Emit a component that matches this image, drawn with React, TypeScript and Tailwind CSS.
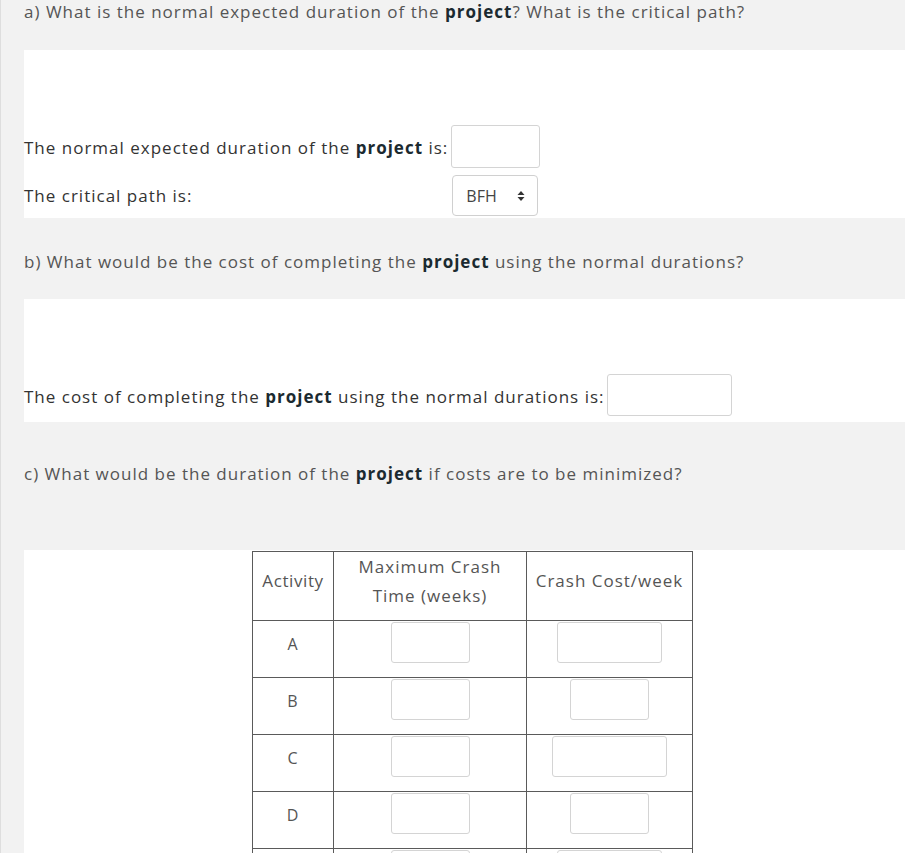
import React from 'react';

const font = { fontFamily: '"Open Sans", "Liberation Sans", sans-serif' };

function Bold({ children }: { children: React.ReactNode }) {
  return <strong className="font-bold text-[#1b2a30]">{children}</strong>;
}

function TextBox({ w }: { w: string }) {
  return <div className={`${w} rounded-[3px] border border-[#d4d4d4] bg-white`} />;
}

function SelectBox() {
  return (
    <div className="flex h-[41px] w-[86px] items-center justify-between rounded-[4px] border border-[#d0d0d0] bg-white pl-[13px] pr-[12px] text-[16px] tracking-normal text-[#444]">
      <span>BFH</span>
      <svg width="8" height="12" viewBox="0 0 8 12">
        <path d="M4 1 L7.5 5 H0.5 Z" fill="#333" />
        <path d="M4 11 L7.5 7 H0.5 Z" fill="#333" />
      </svg>
    </div>
  );
}

const rows = [
  { id: 'A', cost: 'w-[105px]' },
  { id: 'B', cost: 'w-[79px]' },
  { id: 'C', cost: 'w-[115px]' },
  { id: 'D', cost: 'w-[79px]' },
  { id: 'E', cost: 'w-[105px]' },
];

export default function App() {
  return (
    <div className="h-[853px] overflow-hidden bg-[#f2f2f2] text-[17px] tracking-[1px]" style={font}>
      <div className="border-l border-[#dedede]">
        {/* a) */}
        <div className="h-[50px] pl-[23px] leading-[24px] text-[#555]">
          a) What is the normal expected duration of the <Bold>project</Bold>? What is the critical path?
        </div>
        <div className="ml-[23px] h-[168px] bg-white pt-[75px] text-[#333]">
          <div className="grid w-fit grid-cols-[auto_auto] items-center gap-y-[7px]">
            <div className="pr-[3px] pt-[2px]">
              The normal expected duration of the <Bold>project</Bold> is:
            </div>
            <TextBox w="w-[89px] h-[43px]" />
            <div>The critical path is:</div>
            <div className="pl-[1px]">
              <SelectBox />
            </div>
          </div>
        </div>

        {/* b) */}
        <div className="h-[81px] pl-[23px] pt-[32px] leading-[24px] text-[#555]">
          b) What would be the cost of completing the <Bold>project</Bold> using the normal durations?
        </div>
        <div className="ml-[23px] h-[123px] bg-white pt-[75px] text-[#333]">
          <div className="flex items-center gap-[2px]">
            <span className="pt-[3px]">
              The cost of completing the <Bold>project</Bold> using the normal durations is:
            </span>
            <TextBox w="w-[125px] h-[42px]" />
          </div>
        </div>

        {/* c) */}
        <div className="h-[128px] pl-[23px] pt-[40px] leading-[24px] text-[#555]">
          c) What would be the duration of the <Bold>project</Bold> if costs are to be minimized?
        </div>
        <div className="ml-[23px] bg-white pb-[40px] pl-[228px] pt-[1px]">
          <table className="border-collapse text-center text-[#555]">
            <thead>
              <tr className="h-[67px]">
                <th className="w-[81px] border border-[#5a5a5a] pb-[11px] align-middle font-normal leading-[29px] tracking-[0.6px]">
                  Activity
                </th>
                <th className="w-[193px] border border-[#5a5a5a] pb-[10px] align-middle font-normal leading-[29px]">
                  Maximum Crash
                  <br />
                  Time (weeks)
                </th>
                <th className="w-[166px] border border-[#5a5a5a] pb-[11px] align-middle font-normal leading-[29px]">
                  Crash Cost/week
                </th>
              </tr>
            </thead>
            <tbody>
              {rows.map((r) => (
                <tr key={r.id} className="h-[57px]">
                  <td className="border border-[#5a5a5a] pb-[10px] align-middle text-[16px]">{r.id}</td>
                  <td className="border border-[#5a5a5a] pb-[14px] pt-[1px] align-top">
                    <div className="flex justify-center">
                      <TextBox w="w-[79px] h-[41px]" />
                    </div>
                  </td>
                  <td className="border border-[#5a5a5a] pb-[14px] pt-[1px] align-top">
                    <div className="flex justify-center">
                      <TextBox w={`${r.cost} h-[41px]`} />
                    </div>
                  </td>
                </tr>
              ))}
            </tbody>
          </table>
        </div>
      </div>
    </div>
  );
}
